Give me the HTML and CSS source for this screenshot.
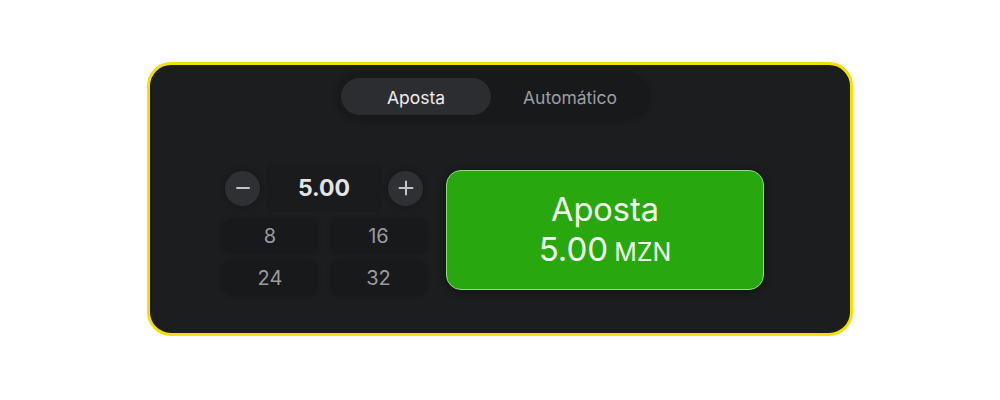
FILE: index.html
```html
<!DOCTYPE html>
<html lang="pt">
<head>
<meta charset="utf-8">
<title>Aposta</title>
<link rel="stylesheet" href="styles.css">
</head>
<body>
<div class="card">
  <div class="tabs">
    <div class="tab active">Aposta</div>
    <div class="tab">Automático</div>
  </div>
  <div class="row">
    <div class="controls">
      <div class="stepper">
        <button class="circle" aria-label="minus">
          <svg width="14" height="14" viewBox="0 0 14 14"><path d="M1 7h12" stroke="#c4c4c6" stroke-width="2" stroke-linecap="round"/></svg>
        </button>
        <div class="value">5.00</div>
        <button class="circle" aria-label="plus">
          <svg width="16" height="16" viewBox="0 0 16 16"><path d="M1.5 8h13M8 1.5v13" stroke="#c4c4c6" stroke-width="2" stroke-linecap="round"/></svg>
        </button>
      </div>
      <div class="grid">
        <div class="chip">8</div>
        <div class="chip">16</div>
        <div class="chip">24</div>
        <div class="chip">32</div>
      </div>
    </div>
    <button class="bet">
      <span class="bet-title">Aposta</span>
      <span class="bet-amount">5.00<span class="cur">MZN</span></span>
    </button>
  </div>
</div>
</body>
</html>
```

FILE: styles.css
```css
* { box-sizing: border-box; }
body {
  margin: 0;
  background: #ffffff;
  font-family: Inter, "Noto Sans", sans-serif;
}
.card {
  width: 706px;
  height: 274px;
  margin: 62px auto 0;
  border: 3px solid #f4e000;
  border-radius: 24px;
  background: #1c1d1f;
  padding: 8px 14px 0 0;
  display: flex;
  flex-direction: column;
  align-items: center;
}
.tabs {
  display: flex;
  gap: 4px;
  padding: 5px 4px;
  background: #18191b;
  border-radius: 24px;
  box-shadow: 0 0 6px rgba(0,0,0,0.25);
}
.tab {
  width: 150px;
  height: 37px;
  border-radius: 19px;
  display: flex;
  align-items: center;
  justify-content: center;
  font-size: 17.5px;
  color: #9d9ea2;
  padding-top: 1px;
}
.tab.active {
  background: #2c2d30;
  color: #ececec;
}
.row {
  display: flex;
  align-items: center;
  gap: 19px;
  margin-top: 44px;
}
.controls {
  width: 205px;
  display: flex;
  flex-direction: column;
  gap: 7px;
}
.stepper {
  height: 48px;
  display: flex;
  align-items: center;
  justify-content: space-between;
  padding: 0 4px 0 3px;
}
.circle {
  width: 35px;
  height: 35px;
  border-radius: 50%;
  border: 0;
  padding: 0;
  background: #2f3033;
  display: flex;
  align-items: center;
  justify-content: center;
  box-shadow: 0 0 6px rgba(0,0,0,0.3);
}
.value {
  flex: 1;
  align-self: stretch;
  margin: 0 6px;
  background: #1a1b1d;
  display: flex;
  align-items: center;
  justify-content: center;
  font-size: 23px;
  font-weight: 700;
  color: #e4e4e6;
}
.grid {
  display: grid;
  grid-template-columns: 96px 97px;
  grid-auto-rows: 34px;
  column-gap: 12px;
  row-gap: 8px;
}
.chip {
  border-radius: 10px;
  background: #18191b;
  box-shadow: 0 0 4px rgba(0,0,0,0.25);
  display: flex;
  align-items: center;
  justify-content: center;
  font-size: 20px;
  color: #9a9b9f;
}
.bet {
  width: 318px;
  height: 120px;
  border-radius: 15px;
  border: 1px solid #8fdc7c;
  background: #28a70f;
  color: #f3fff0;
  font-family: Inter, "Noto Sans", sans-serif;
  display: flex;
  flex-direction: column;
  align-items: center;
  justify-content: center;
  padding: 4px 0 0;
  box-shadow: 0 2px 8px rgba(0,0,0,0.4);
}
.bet-title {
  font-size: 32.5px;
  line-height: 38px;
}
.bet-amount {
  font-size: 33px;
  line-height: 40px;
}
.cur {
  font-size: 25px;
  margin-left: 6px;
}
```
